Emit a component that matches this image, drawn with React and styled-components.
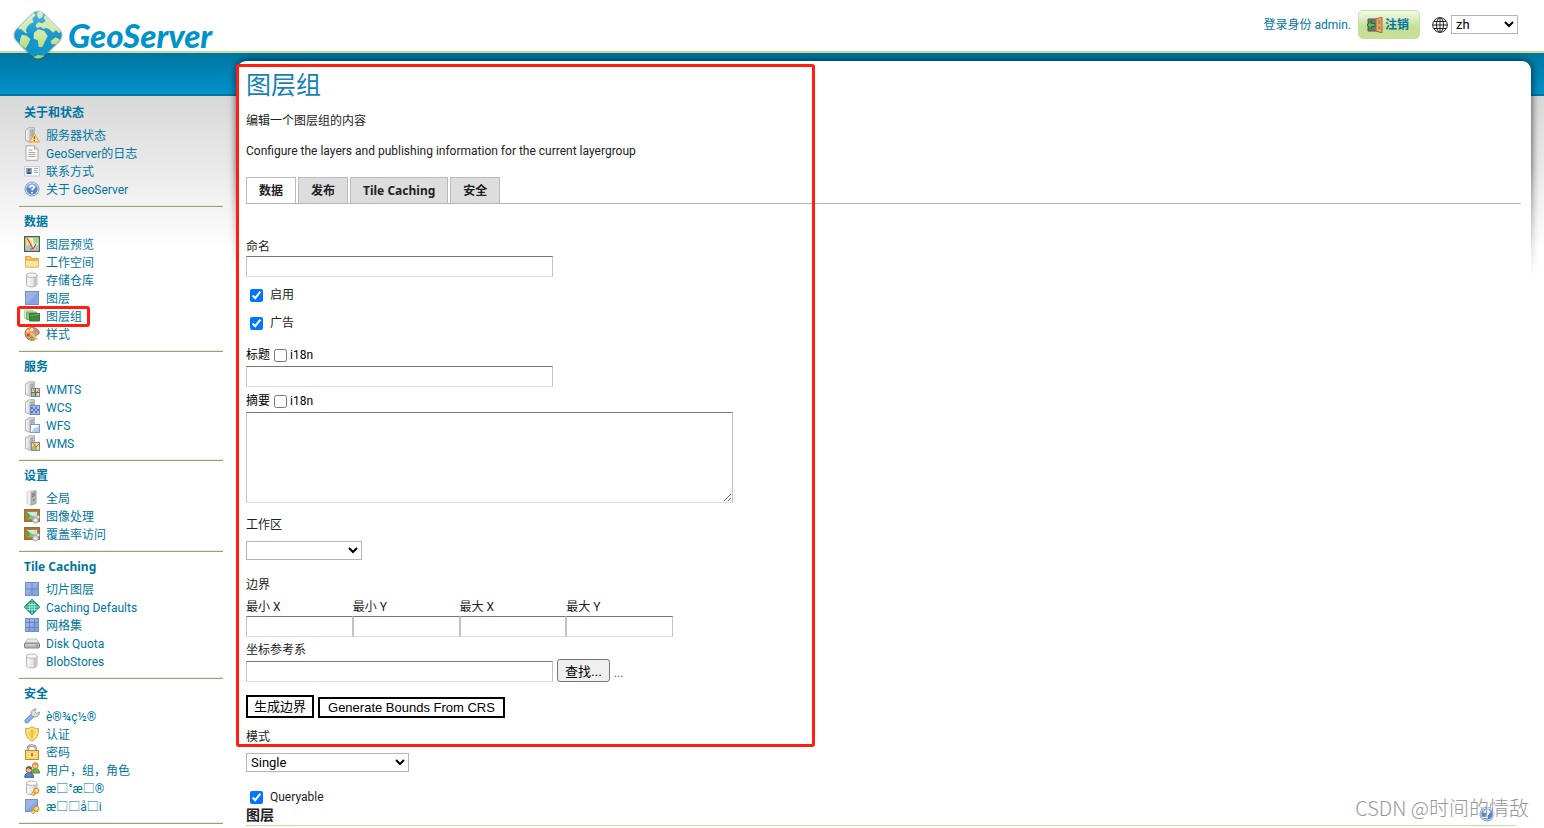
import React from 'react'
import styled, { createGlobalStyle } from 'styled-components'

const GlobalStyle = createGlobalStyle`
    * {
        box-sizing: border-box;
    }
    body {
        margin: 0;
        background: #fff;
        color: #222;
        font-family: Roboto, "Noto Sans CJK SC", sans-serif;
        font-size: 12px;
        line-height: 18px;
    }
    h1, h2, h3, p, ul {
        margin: 0;
        padding: 0;
    }
    a {
        color: #0076a1;
        text-decoration: none;
    }
`

const Header = styled.header`
    position: relative;
    z-index: 1;
    display: flex;
    justify-content: space-between;
    height: 53px;
    padding: 0 26px 0 11px;
    border-bottom: 2px solid #c5df96;
    background: #fff;
`
const LogoLink = styled.a`
    display: flex;
    align-items: flex-start;
    gap: 3px;
    padding-top: 9px;
    color: #0092cb;
    font: italic 900 33px/52px Lato, sans-serif;
    svg {
        flex: none;
    }
`
const UserArea = styled.div`
    display: flex;
    align-items: center;
    color: #0076a1;
    padding-bottom: 2px;
`
const LogoutButton = styled.button`
    display: flex;
    align-items: center;
    gap: 2px;
    height: 29px;
    margin: 0 12px 0 7px;
    padding: 0 10px 0 8px;
    border: 1px solid #c5df96;
    border-radius: 5px;
    background: linear-gradient(#f4faea, #c5df96 60%);
    color: #0076a1;
    font: bold 12px/18px "Noto Sans", "Noto Sans CJK SC", sans-serif;
`
const Select = styled.select`
    display: block;
    width: ${props => props.$width};
    height: 19px;
    margin: ${props => props.$gap || '0'} 0 0;
    padding: 0;
    border: 1px solid #b5b5b5;
    border-radius: 0;
    background-color: #fff;
    color: #000;
    font: 13px Roboto, sans-serif;
`
const LanguageBox = styled.label`
    display: flex;
    align-items: center;
    gap: 3px;
`

const Body = styled.div`
    display: flex;
    align-items: flex-start;
    min-height: calc(100vh - 53px);
    padding-right: 13px;
    background:
        linear-gradient(#0076a1, #0092cb) 0 0 / 100% 41px no-repeat,
        linear-gradient(#0076a1, #0076a1) 0 41px / 100% 2px no-repeat,
        linear-gradient(#d8d8d8, #fff) 0 43px / 100% 155px no-repeat;
`
const Sidebar = styled.nav`
    flex: none;
    width: 237px;
    padding: 46px 14px 0 19px;
`
const MenuSection = styled.section`
    padding: 5px 0 7px 5px;
    border-bottom: 1px solid #95a181;
    box-shadow: inset 0 -1px #e6f1d6;
    margin-bottom: 1px;
`
const MenuTitle = styled.h3`
    margin-bottom: 5px;
    color: #0076a1;
    font: bold 12px/18px "Noto Sans", "Noto Sans CJK SC", sans-serif;
`
const MenuItem = styled.li`
    position: relative;
    display: flex;
    height: 18px;
    list-style: none;
    a {
        display: flex;
        gap: 6px;
    }
    svg {
        flex: none;
    }
`
const Highlight = styled.div`
    position: absolute;
    top: ${props => props.$top};
    left: ${props => props.$left};
    width: ${props => props.$width};
    height: ${props => props.$height};
    border: 3px solid #ff1f12;
    border-radius: 3px;
    pointer-events: none;
`

const Card = styled.main`
    position: relative;
    isolation: isolate;
    flex: 1;
    min-width: 0;
    margin-top: 8px;
    padding: 10px 10px 0 9px;
    border-radius: 9px;
    background: #fff;
`
const CardShadow = styled.div`
    position: absolute;
    z-index: -1;
    top: -10px;
    left: -10px;
    right: -10px;
    height: 228px;
    overflow: hidden;
    mask-image: linear-gradient(#000 50%, transparent);
    &::before {
        content: "";
        position: absolute;
        inset: 10px 10px -20px;
        border-radius: 9px;
        box-shadow: 0 0 9px rgba(0, 0, 0, 0.75);
    }
`
const PageTitle = styled.h1`
    color: #1581b8;
    font-size: 25px;
    font-weight: normal;
    line-height: 30px;
`
const Intro = styled.p`
    margin-top: ${props => props.$gap};
`
const Tabs = styled.div`
    display: flex;
    gap: 2px;
    margin-top: 17px;
    border-bottom: 1px solid #b5b5b5;
`
const Tab = styled.button`
    height: 26px;
    padding: 0 12px;
    border: 1px solid #bbb;
    border-width: 1px 1px 0;
    background: ${props => (props.$active ? '#fff' : '#ddd')};
    color: #222;
    font: bold 12px/24px "Noto Sans", "Noto Sans CJK SC", sans-serif;
`
const Label = styled.label`
    display: block;
    width: fit-content;
    margin-top: ${props => props.$gap};
`
const LabelRow = styled.div`
    display: flex;
    align-items: center;
    gap: 4px;
    height: 18px;
    margin-top: ${props => props.$gap};
    input {
        margin: 0;
    }
    label {
        display: flex;
        align-items: center;
        gap: 3px;
        color: #000;
    }
`
const CheckRow = styled.label`
    display: flex;
    align-items: center;
    gap: 7px;
    width: fit-content;
    height: 18px;
    margin-top: ${props => props.$gap};
    padding-left: 4px;
    input {
        margin: 0;
    }
`
const TextInput = styled.input`
    display: block;
    width: ${props => props.$width || '307px'};
    height: 21px;
    margin: ${props => props.$gap || '0'} 0 0;
    padding: 1px 3px;
    border: 1px solid;
    border-color: #767676 #c3c3c3 #ddd;
    font: 13px "Liberation Sans", sans-serif;
`
const TextArea = styled.textarea`
    display: block;
    width: 487px;
    height: 91px;
    margin-top: 2px;
    padding: 2px;
    border: 1px solid;
    border-color: #767676 #c3c3c3 #ddd;
`
const Bounds = styled.div`
    display: grid;
    grid-template-columns: repeat(4, 1fr);
    width: 427px;
    margin-top: 4px;
`
const ControlRow = styled.div`
    display: flex;
    align-items: flex-end;
    gap: 4px;
    margin-top: ${props => props.$gap};
`
const FindButton = styled.button`
    height: 23px;
    padding: 0 7px;
    border: 1px solid #767676;
    border-radius: 3px;
    background: #efefef;
    color: #000;
    font: 13px "Liberation Sans", "Noto Sans CJK SC", sans-serif;
`
const BoundsButton = styled.button`
    height: ${props => props.$height};
    padding: 0 ${props => props.$pad};
    border: 2px solid #000;
    background: #fff;
    color: #000;
    font: 13px/17px "Liberation Sans", "Noto Sans CJK SC", sans-serif;
`
const LayersHeading = styled.h2`
    margin-right: 5px;
    padding-bottom: 1px;
    border-bottom: 1px solid #c5df96;
    font-size: 14px;
    line-height: 18px;
`
const HelpLink = styled.a`
    position: absolute;
    right: 36px;
    bottom: 4px;
    height: 16px;
`
const Watermark = styled.div`
    position: absolute;
    right: 2px;
    bottom: 6px;
    color: #999;
    font: 300 20px/24px "Noto Sans CJK SC", sans-serif;
    text-shadow: 1px 1px #fff;
    pointer-events: none;
`

const Svg = ({ size = 16, children }) => (
    <svg width={size} height={size} viewBox="0 0 16 16" aria-hidden="true">{children}</svg>
)

const Tower = () => (
    <g>
        <path d="M1.500 3 5 .7h5.500v13L6 15.400l-4.500-2z" fill="#dedede" stroke="#a2a2a2" strokeWidth=".8" />
        <path d="M5.500 2.500 10.300.9v12.300l-4.800 1.800z" fill="#c2c2c2" />
        <path d="M2.800 3.400v9.400" stroke="#fff" />
        <path d="M6.500 4.300l3-1M6.500 6.300l3-1M6.500 8.300l3-1" stroke="#8a8a8a" strokeWidth=".8" />
    </g>
)
const Drum = () => (
    <g>
        <path d="M2.500 3.2v9.3c0 3.2 10.5 3.2 10.5 0V3.2z" fill="#eaeaea" stroke="#b5b5b5" />
        <path d="M9.500 5v9.300c2-.2 3-.9 3-1.800V4z" fill="#c6c6c6" />
        <path d="M4.500 5.300v8.300" stroke="#fff" strokeWidth="1.500" />
        <ellipse cx="7.750" cy="3.200" rx="5.250" ry="2.200" fill="#f6f6f6" stroke="#b5b5b5" />
    </g>
)
const BlueSquare = ({ size = 13 }) => (
    <g>
        <rect x="1.500" y="1.500" width={size} height={size} fill="#86a5e0" stroke="#7390c4" />
        <path d={`M2 ${size + 1}V2h${size - 1}z`} fill="#99b4e8" />
    </g>
)
const MapTile = () => (
    <g>
        <rect x="7.500" y="7.500" width="8" height="8" fill="#f5dc82" stroke="#7a86ad" />
        <path d="M8 12l3-3 2 2-2 4H8z" fill="#8fc887" />
        <path d="M9 8l3 4 3-3M12 12v3" fill="none" stroke="#e26c30" />
    </g>
)
const Key = () => (
    <g fill="none" stroke="#c98a22">
        <path d="M8 15l3.500-3.500" strokeWidth="3.400" />
        <path d="M8 15l3.500-3.500" stroke="#ffd35b" strokeWidth="1.800" />
        <circle cx="12.300" cy="10.800" r="2.600" fill="#ffd35b" />
        <circle cx="13" cy="10" r=".7" fill="#fff" stroke="none" />
    </g>
)
const Picture = () => (
    <g>
        <rect x=".8" y="1.800" width="14.400" height="11.400" fill="#bb8039" stroke="#a56a2c" strokeWidth="1.600" />
        <rect x="3" y="4" width="10" height="7" fill="#b9e4fb" />
        <path d="M3 8l4-1 2 1 4 1v2H3z" fill="#7cc86c" />
        <path d="M3 4l3 3-1 3-2 1z" fill="#4c9f4e" />
        <circle cx="8.500" cy="6.300" r="1.400" fill="#f7e481" />
        <circle cx="11.500" cy="12.300" r="2.800" fill="#dcdcdc" stroke="#a5a5a5" />
        <circle cx="11.500" cy="12.300" r=".9" fill="#fff" />
        <circle cx="14" cy="9" r="1.600" fill="#e4e4e4" stroke="#a5a5a5" strokeWidth=".6" />
    </g>
)
const Help = () => (
    <g>
        <circle cx="8" cy="8" r="7" fill="#d6e2f5" stroke="#7f9cc7" />
        <circle cx="8" cy="8" r="5.600" fill="#5684c6" />
        <path d="M3.200 6.500a5 5 0 0 1 9.600 0C10 8 6 8 3.200 6.500z" fill="#8fb1e2" />
        <path d="M6 6.500c0-3 4.300-2.500 4 0C9.900 8 8 7.800 8 9.600M8 11v1.400" fill="none" stroke="#fff" strokeWidth="1.500" />
    </g>
)

const icons = {
    status: <><Tower /><path d="M10.300 6.500 15.500 15h-10z" fill="#ffe08a" stroke="#e0a040" /><path d="M10.400 9.300v3M10.400 13v1.200" stroke="#7b5316" strokeWidth="1.200" /></>,
    logs: <>
        <path d="M2 .8h8.500L14 4v11.300H2z" fill="#fafafa" stroke="#a9a9a9" />
        <path d="M10.500 1v3H14" fill="#ddd" stroke="#a9a9a9" />
        <path d="M4.500 5h4M4.500 7.500h7M4.500 9.500h7M4.500 11.500h7" stroke="#a4a4a4" />
    </>,
    contact: <>
        <rect x=".5" y="3.500" width="15" height="9.500" fill="#f7f8fa" stroke="#c5cfdc" />
        <rect x="2" y="5" width="6" height="6" fill="#86a9dd" />
        <circle cx="5" cy="7" r="1.500" fill="#8a5a3a" />
        <path d="M3 11c0-3 4-3 4 0z" fill="#244f91" />
        <path d="M10 5.500h4M10 7.500h3M10 9.500h4" stroke="#9aa9bd" />
    </>,
    help: <Help />,
    preview: <>
        <rect x=".7" y=".7" width="14.600" height="14.600" fill="#eef3dc" stroke="#4e6148" strokeWidth="1.400" />
        <path d="M2 2h3l4 6-7 3z" fill="#f7dc7d" />
        <path d="M9 2h5v5l-4 1z" fill="#a4d488" />
        <path d="M2 14v-4l5-2 1 6zM11 10l3-1v5h-4z" fill="#9dc9e4" />
        <path d="M3 2l3 5 3 6 3-5M9 13H6" fill="none" stroke="#e4472d" strokeWidth="1.200" />
    </>,
    folder: <>
        <path d="M1.500 13V2.500h5l1.500 2h6.500V13z" fill="#efb94f" stroke="#deab48" />
        <path d="M3 4h3" stroke="#fff1bd" />
        <path d="M1.500 6.500h13V13h-13z" fill="#ffe59c" stroke="#e7b95c" />
    </>,
    store: <Drum />,
    layer: <BlueSquare />,
    group: <>
        <path d="M.5 2.500h8.500v8H.5z" fill="#d6ecd1" stroke="#b4dab0" />
        <path d="M2.500 4h10v7.500h-10z" fill="#8dc582" stroke="#75b46d" />
        <path d="M5.500 5.500h10V13h-10z" fill="#3e8a3b" stroke="#347a36" />
        <path d="M6 8c3-1 6-1 9-2" stroke="#76b16c" fill="none" />
    </>,
    style: <>
        <path d="M1 7C1 0 14 0 15.200 6c.6 3-3 2.500-3.500 4-.4 1.500.8 3-1.500 4C6 15.500 1 12 1 7z" fill="#e39b68" stroke="#b76c3e" />
        <circle cx="4" cy="5" r="1.600" fill="#f5d86a" />
        <circle cx="7.800" cy="3.700" r="1.600" fill="#f1f1f1" />
        <circle cx="11.700" cy="5" r="1.600" fill="#65a4e7" />
        <circle cx="4.300" cy="9" r="1.600" fill="#d64236" />
        <circle cx="7.600" cy="11.500" r="1.500" fill="#69b75d" />
        <path d="M7 7l7 7" stroke="#f1cd7c" strokeWidth="1.500" />
    </>,
    wmts: <><Tower /><MapTile /><path d="M7 11.500h9M11.500 7v9" stroke="#5d658c" /></>,
    wcs: <>
        <Tower />
        <rect x="6.500" y="6.500" width="9" height="9" fill="#a9bcec" stroke="#6d82c4" />
        <path d="M7 8h2v2H7zM11 8h2v2h-2zM9 10h2v2H9zM13 10h2v2h-2zM7 12h2v2H7zM11 12h2v2h-2z" fill="#5774c8" />
    </>,
    wfs: <><Tower /><rect x="6.500" y="7.500" width="9" height="8" fill="#fff" stroke="#7c9ad0" /><path d="M8 15c1-4 3-4 7-6v6z" fill="#b4cef2" /></>,
    wms: <><Tower /><MapTile /></>,
    global: <>
        <path d="M3 2 7 .6h5v13L7 15.400l-4-2z" fill="#eee" stroke="#c9c9c9" strokeWidth=".8" />
        <path d="M7 2.200 12 .8v12.600l-5 1.600z" fill="#b5b5b5" stroke="#959595" strokeWidth=".6" />
        <path d="M8 4.500l3-1M8 6.500l3-1" stroke="#666" />
        <path d="M9 10h1.500" stroke="#3b9b3d" strokeWidth="1.500" />
    </>,
    image: <Picture />,
    tile: <><BlueSquare /><path d="M8 2v12M2 8h12" stroke="#6683c0" /></>,
    defaults: <>
        <path d="M8 1 15 8 8 15 1 8z" fill="#35b09a" stroke="#249580" strokeLinejoin="round" strokeWidth="2" />
        <path d="M5.500 4v8M10.500 4v8M4 5.500h8M2 10.500h12M8 1v14M1 8h14" stroke="#b5ead5" strokeWidth=".8" />
    </>,
    grid: <><BlueSquare /><path d="M5.500 2v12M10.500 2v12M2 5.500h12M2 10.500h12" stroke="#6683c0" /></>,
    disk: <>
        <path d="M3.500 4h9l3 5H.5z" fill="#e8e8e8" stroke="#bbb" />
        <rect x=".5" y="8" width="15" height="5" rx="1" fill="#b5b5b5" stroke="#858585" />
        <path d="M2 10h9" stroke="#ddd" /><path d="M12.500 11h1.500" stroke="#4a9c45" />
    </>,
    wrench: <>
        <path d="M2.800 13.200 8.500 7.500" stroke="#5f88cc" strokeLinecap="round" strokeWidth="4.500" />
        <path d="M2.800 13.200 8.500 7.500" stroke="#8eb3ed" strokeLinecap="round" strokeWidth="2.800" />
        <path d="M7.200 7.500c-.8-3.500 1.500-7 5-6.500l-1.500 2.700 1.700 1.700 3-1.400c.4 3.500-3 5.500-6 4.800z" fill="#ddd" stroke="#858585" strokeWidth=".8" />
    </>,
    shield: <>
        <path d="M1.500 2.500C4 3 6 2 8 .7c2 1.300 4 2.300 6.500 1.800C14.500 9 13 13 8 15.300 3 13 1.500 9 1.500 2.500z" fill="#fcd55d" stroke="#dfab3e" />
        <path d="M3.500 4c2 .2 3.200-.5 4.500-1.400 1.300.9 2.500 1.600 4.500 1.400C12.400 9 11 12 8 13.400 5 12 3.600 9 3.500 4z" fill="none" stroke="#fff0b5" />
        <path d="M8 3v10" stroke="#e0a93a" />
    </>,
    lock: <>
        <path d="M4 7V4.500c0-4 8-4 8 0V7" fill="none" stroke="#909090" strokeWidth="2.400" />
        <path d="M4 7V4.500c0-4 8-4 8 0V7" fill="none" stroke="#d8d8d8" />
        <rect x="1.500" y="6.500" width="13" height="9" fill="#ffd369" stroke="#c98a30" />
        <path d="M4 9.500h8M4 12.500h8" stroke="#fff0b0" /><path d="M8 9v3.500" stroke="#9c611a" strokeWidth="1.500" />
    </>,
    users: <>
        <path d="M7.500 11c0-6 8-6 8 0z" fill="#74b846" stroke="#4b8a2c" />
        <circle cx="11.300" cy="3.700" r="2.900" fill="#f5c77f" stroke="#a9742e" strokeWidth=".8" />
        <path d="M8.200 3.500c0-4.500 6.300-3.800 6 0-2-.2-3-1-4-1.300z" fill="#d79a38" />
        <path d="M.7 15.300c0-6.500 9-6.500 9 0z" fill="#5688d1" stroke="#2f5ba2" />
        <circle cx="5" cy="7.700" r="3" fill="#f5c08c" stroke="#83502f" strokeWidth=".8" />
        <path d="M1.900 7.500c0-4.600 6.500-4 6.200 0-2-.2-3-1-4-1.300z" fill="#8a5135" />
    </>,
    dataKey: <><Drum /><Key /></>,
    layerKey: <><BlueSquare size={12} /><Key /></>,
}

const menu = [
    { title: '关于和状态', items: [['status', '服务器状态'], ['logs', 'GeoServer的日志'], ['contact', '联系方式'], ['help', '关于 GeoServer']] },
    { title: '数据', items: [['preview', '图层预览'], ['folder', '工作空间'], ['store', '存储仓库'], ['layer', '图层'], ['group', '图层组', true], ['style', '样式']] },
    { title: '服务', items: [['wmts', 'WMTS'], ['wcs', 'WCS'], ['wfs', 'WFS'], ['wms', 'WMS']] },
    { title: '设置', items: [['global', '全局'], ['image', '图像处理'], ['image', '覆盖率访问']] },
    { title: 'Tile Caching', items: [['tile', '切片图层'], ['defaults', 'Caching Defaults'], ['grid', '网格集'], ['disk', 'Disk Quota'], ['store', 'BlobStores']] },
    { title: '安全', items: [['wrench', 'è®¾ç½®'], ['shield', '认证'], ['lock', '密码'], ['users', '用户，组，角色'], ['dataKey', 'æ□°æ□®'], ['layerKey', 'æ□□å□i']] },
]

const bounds = [['minX', '最小 X'], ['minY', '最小 Y'], ['maxX', '最大 X'], ['maxY', '最大 Y']]

const Logo = () => (
    <svg width="54" height="54" viewBox="3 3 162 162" aria-hidden="true">
        <defs>
            <linearGradient id="ocean" x1="0" y1="0" x2="1" y2="1">
                <stop offset="0" stopColor="#5cb8e0" />
                <stop offset=".5" stopColor="#1798cd" />
                <stop offset="1" stopColor="#0f92c9" />
            </linearGradient>
            <linearGradient id="land" gradientUnits="userSpaceOnUse" x1="0" y1="10" x2="0" y2="150">
                <stop offset="0" stopColor="#d9edc8" />
                <stop offset=".5" stopColor="#cfe8a4" />
                <stop offset="1" stopColor="#a4d65a" />
            </linearGradient>
            <clipPath id="diamond">
                <rect x="27" y="24" width="114" height="114" rx="24" transform="rotate(45 84 81)" />
            </clipPath>
        </defs>
        <rect x="23" y="21" width="122" height="122" rx="28" transform="rotate(45 84 82)" fill="#555" opacity=".2" />
        <rect x="25" y="23" width="118" height="118" rx="26" transform="rotate(45 84 82)" fill="#555" opacity=".25" />
        <rect x="27" y="24" width="114" height="114" rx="24" transform="rotate(45 84 81)" fill="url(#ocean)" />
        <g clipPath="url(#diamond)" fill="url(#land)">
            <path d="M10 64 44 22 68 10l8 12-9 10 4 11-12 5-8 10-4 10 6 8-8-2-11-10-14-4z" />
            <path d="M36 80l14 3 11 10-5 13-9 16-18-14 2-17z" />
            <path d="M84 10l16 4-3 14-10 4-6-8z" />
            <path d="M77 52l8-10 10 4 12-6-6-10 6-14 16 6 38 42-14 12-9-10-9 8-11-10-9-4-11 2-6-6-12 4z" />
            <path d="M72 74l13-10 18 5 10 15-8 16-8 18-11-2-3-19-12-5z" />
            <path d="M122 99l15-11 14 8-11 12-15 1zM66 150l18-9 24 3-14 16z" />
        </g>
        <path d="M28 66Q50 40 76 20t34 4l36 40" fill="none" stroke="#fff" strokeWidth="5" opacity=".2" />
    </svg>
)

const App = () => {
    return (
        <>
            <GlobalStyle />
            <Header>
                <LogoLink href="#"><Logo />GeoServer</LogoLink>
                <UserArea>
                    <span>登录身份 admin.</span>
                    <LogoutButton type="button">
                        <Svg>
                            <path d="M1 2h9v12H1z" fill="#777" stroke="#555" />
                            <path d="M9 2 15 0v16l-6-2z" fill="#e4ad70" stroke="#a06a35" />
                            <path d="M11 3.500l2.500-.8v4.500L11 7.500zM11 9l2.500.3v3.500L11 12z" fill="#c98743" />
                            <path d="M0 8l4.500-4v2.500H8v3H4.500V12z" fill="#62b957" stroke="#26702a" />
                        </Svg>
                        注销
                    </LogoutButton>
                    <LanguageBox aria-label="Language">
                        <Svg>
                            <g fill="none" stroke="#222" strokeWidth="1">
                                <circle cx="8" cy="8" r="7.300" />
                                <ellipse cx="8" cy="8" rx="3.500" ry="7.300" />
                                <path d="M8 .7v14.600M.7 8h14.600M2 4.500h12M2 11.500h12" />
                            </g>
                        </Svg>
                        <Select $width="67px" defaultValue="zh"><option>zh</option></Select>
                    </LanguageBox>
                </UserArea>
            </Header>
            <Body>
                <Sidebar>
                    {menu.map((section) => (
                        <MenuSection key={section.title}>
                            <MenuTitle>{section.title}</MenuTitle>
                            <ul>
                                {section.items.map(([icon, text, marked]) => (
                                    <MenuItem key={text}>
                                        <a href="#"><Svg>{icons[icon]}</Svg>{text}</a>
                                        {marked && <Highlight $top="-2px" $left="-7px" $width="73px" $height="21px" />}
                                    </MenuItem>
                                ))}
                            </ul>
                        </MenuSection>
                    ))}
                </Sidebar>
                <Card>
                    <CardShadow />
                    <PageTitle>图层组</PageTitle>
                    <Intro $gap="11px">编辑一个图层组的内容</Intro>
                    <Intro $gap="12px">Configure the layers and publishing information for the current layergroup</Intro>
                    <Tabs>
                        <Tab type="button" $active>数据</Tab>
                        <Tab type="button">发布</Tab>
                        <Tab type="button">Tile Caching</Tab>
                        <Tab type="button">安全</Tab>
                    </Tabs>

                    <Label htmlFor="name" $gap="34px">命名</Label>
                    <TextInput id="name" />
                    <CheckRow $gap="9px"><input type="checkbox" defaultChecked />启用</CheckRow>
                    <CheckRow $gap="10px"><input type="checkbox" defaultChecked />广告</CheckRow>

                    <LabelRow $gap="14px">
                        <label htmlFor="title">标题</label>
                        <label><input type="checkbox" />i18n</label>
                    </LabelRow>
                    <TextInput id="title" $gap="2px" />
                    <LabelRow $gap="5px">
                        <label htmlFor="abstract">摘要</label>
                        <label><input type="checkbox" />i18n</label>
                    </LabelRow>
                    <TextArea id="abstract" />

                    <Label htmlFor="workspace" $gap="13px">工作区</Label>
                    <Select id="workspace" $width="116px" $gap="7px"><option></option></Select>

                    <Label as="div" $gap="16px">边界</Label>
                    <Bounds>
                        {bounds.map(([id, text]) => (
                            <div key={id}>
                                <Label htmlFor={id}>{text}</Label>
                                <TextInput id={id} $width="100%" />
                            </div>
                        ))}
                    </Bounds>
                    <Label htmlFor="srs" $gap="4px">坐标参考系</Label>
                    <ControlRow>
                        <TextInput id="srs" />
                        <FindButton type="button">查找...</FindButton>
                        <a href="#">...</a>
                    </ControlRow>
                    <ControlRow $gap="13px">
                        <BoundsButton type="button" $height="23px" $pad="6px">生成边界</BoundsButton>
                        <BoundsButton type="button" $height="21px" $pad="8px">Generate Bounds From CRS</BoundsButton>
                    </ControlRow>

                    <Label htmlFor="mode" $gap="10px">模式</Label>
                    <Select id="mode" $width="163px" $gap="7px"><option>Single</option></Select>
                    <CheckRow $gap="16px"><input type="checkbox" defaultChecked />Queryable</CheckRow>
                    <LayersHeading>图层</LayersHeading>
                    <HelpLink href="#" aria-label="Help"><Svg><Help /></Svg></HelpLink>
                    <Watermark>CSDN @时间的情敌</Watermark>
                    <Highlight $top="3px" $left="-1px" $width="579px" $height="683px" />
                </Card>
            </Body>
        </>
    )
}

export default App
